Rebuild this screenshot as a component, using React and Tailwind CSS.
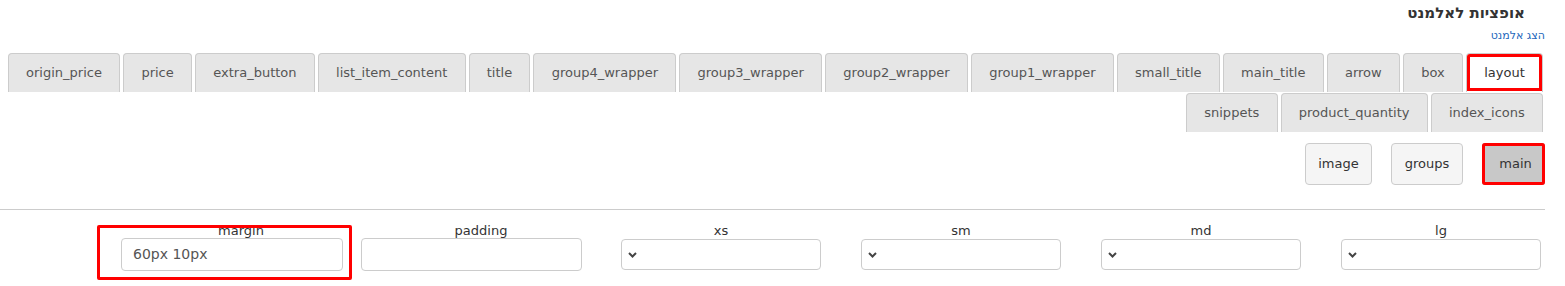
import React from "react";

const row1 = ["layout", "box", "arrow", "main_title", "small_title", "group1_wrapper", "group2_wrapper", "group3_wrapper", "group4_wrapper", "title", "list_item_content", "extra_button", "price", "origin_price"];
const row2 = ["index_icons", "product_quantity", "snippets"];

function Tab({ label, active }) {
    return (
        <div
            className={
                "h-[39px] flex items-center px-[17.25px] border border-b-0 border-[#ccc] rounded-t-[4px] text-[13px] " +
                (active
                    ? "bg-white text-[#333] outline-[3px] outline-solid outline-[#f00] outline-offset-[-4px]"
                    : "bg-[#e6e6e6] text-[#555]")
            }
        >
            {label}
        </div>
    );
}

function SelectBox() {
    return (
        <div className="mx-auto mt-[1px] w-[200px] h-[31px] border border-[#ccc] rounded-[4px] bg-white flex items-center pl-[6px]">
            <svg width="9" height="6" viewBox="0 0 9 6">
                <path d="M1 1 L4.5 4.5 L8 1" fill="none" stroke="#444" strokeWidth="2" />
            </svg>
        </div>
    );
}

function Field({ label, children }) {
    return (
        <div className="flex flex-col">
            <div className="h-[14px] leading-[14px] text-[13px] text-center text-[#333]">{label}</div>
            {children}
        </div>
    );
}

export default function App() {
    return (
        <div dir="rtl" className="w-[1565px] h-[286px] overflow-hidden bg-white font-['DejaVu_Sans',sans-serif] text-[#333]">
            {/* header */}
            <div className="pr-[40px] pt-[2px] h-[22px] leading-[22px] text-[15px] font-bold">אופציות לאלמנט</div>
            <div className="pr-[20px] mt-[6px] h-[16px] leading-[16px] text-[11px] text-[#2266bb]">הצג אלמנט</div>

            {/* tabs */}
            <div className="mt-[9px] pr-[22px] flex gap-x-[3px]">
                {row1.map((t) => (
                    <Tab key={t} label={t} active={t === "layout"} />
                ))}
            </div>
            <div className="mt-[1px] pr-[22px] flex gap-x-[3px]">
                {row2.map((t) => (
                    <Tab key={t} label={t} />
                ))}
            </div>

            {/* buttons */}
            <div className="mt-[11px] pr-[20px] flex gap-x-[19px]">
                <div className="w-[63px] h-[42px] flex items-center justify-center pl-[3px] text-[13px] bg-[#c8c8c8] border border-[#adadad] border-l-2 rounded-[3px] outline-[3px] outline-solid outline-[#f00] outline-offset-[-3px]">main</div>
                <div className="w-[72px] h-[42px] flex items-center justify-center text-[13px] bg-[#f5f5f5] border border-[#ccc] rounded-[4px]">groups</div>
                <div className="w-[67px] h-[42px] flex items-center justify-center text-[13px] bg-[#f5f5f5] border border-[#ccc] rounded-[4px]">image</div>
            </div>

            <div className="mt-[24px] mr-[20px] border-t border-[#ccc]" />

            {/* fields */}
            <div dir="ltr" className="mt-[14px] mr-[4px] w-[1440px] grid grid-cols-6">
                <div className="relative">
                    <Field label="margin">
                        <div className="w-[222px] h-[33px] border border-[#ccc] rounded-[4px] flex items-center pl-[11px] text-[14px] text-[#555]">60px 10px</div>
                    </Field>
                    <div className="absolute left-[-24px] top-[1px] w-[255px] h-[55px] border-[3px] border-[#f00] rounded-[2px]" />
                </div>
                <Field label="padding">
                    <div className="w-[221px] h-[33px] border border-[#ccc] rounded-[4px]" />
                </Field>
                <Field label="xs"><SelectBox /></Field>
                <Field label="sm"><SelectBox /></Field>
                <Field label="md"><SelectBox /></Field>
                <Field label="lg"><SelectBox /></Field>
            </div>
        </div>
    );
}
